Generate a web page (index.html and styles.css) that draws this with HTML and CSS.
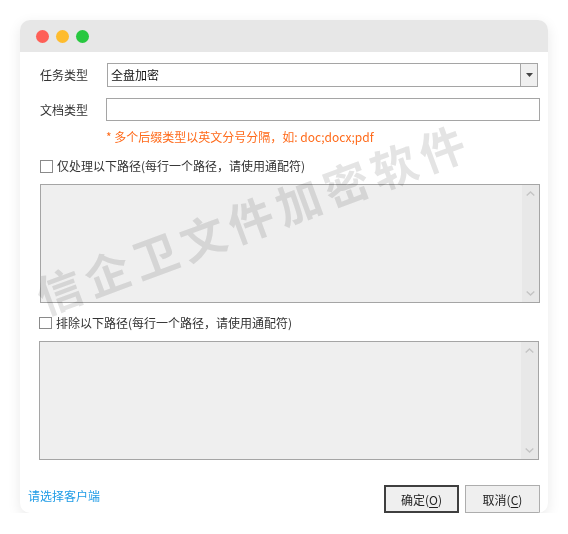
FILE: index.html
```html
<!DOCTYPE html>
<html lang="zh-CN">
<head>
<meta charset="utf-8">
<title>任务设置</title>
<link rel="stylesheet" href="styles.css">
</head>
<body>
<div class="window">
  <div class="titlebar">
    <span class="dot red"></span>
    <span class="dot yellow"></span>
    <span class="dot green"></span>
  </div>
  <div class="content">
    <div class="row row-task">
      <span class="label">任务类型</span>
      <div class="combo">
        <span class="combo-value">全盘加密</span>
        <span class="combo-btn">
          <svg width="7" height="4" viewBox="0 0 7 4"><path d="M0 0H7L3.5 4Z" fill="#444"/></svg>
        </span>
      </div>
    </div>
    <div class="row row-doc">
      <span class="label">文档类型</span>
      <input class="text-input" type="text" value="">
    </div>
    <div class="hint">* 多个后缀类型以英文分号分隔，如: doc;docx;pdf</div>
    <label class="check-row">
      <span class="checkbox"></span>
      <span class="check-label">仅处理以下路径(每行一个路径，请使用通配符)</span>
    </label>
    <div class="area area-include">
      <textarea class="area-text"></textarea>
      <div class="scrollbar">
        <svg width="9" height="5" viewBox="0 0 9 5"><path d="M0.7 4.5L4.5 1L8.3 4.5" fill="none" stroke="#c4c4c4" stroke-width="1.4"/></svg>
        <svg width="9" height="5" viewBox="0 0 9 5"><path d="M0.7 0.5L4.5 4L8.3 0.5" fill="none" stroke="#c4c4c4" stroke-width="1.4"/></svg>
      </div>
    </div>
    <label class="check-row check-exclude">
      <span class="checkbox small"></span>
      <span class="check-label">排除以下路径(每行一个路径，请使用通配符)</span>
    </label>
    <div class="area area-exclude">
      <textarea class="area-text"></textarea>
      <div class="scrollbar">
        <svg width="9" height="5" viewBox="0 0 9 5"><path d="M0.7 4.5L4.5 1L8.3 4.5" fill="none" stroke="#c4c4c4" stroke-width="1.4"/></svg>
        <svg width="9" height="5" viewBox="0 0 9 5"><path d="M0.7 0.5L4.5 4L8.3 0.5" fill="none" stroke="#c4c4c4" stroke-width="1.4"/></svg>
      </div>
    </div>
  </div>
  <div class="footer">
    <a class="link" href="#">请选择客户端</a>
    <div class="buttons">
      <button class="btn btn-default">确定(<u>O</u>)</button>
      <button class="btn">取消(<u>C</u>)</button>
    </div>
  </div>
  <div class="watermark"><span class="wm-text">信企卫文件加密软件</span></div>
</div>
</body>
</html>
```

FILE: styles.css
```css
html, body {
  margin: 0;
  padding: 0;
  background: #ffffff;
}
body {
  font-family: "Noto Sans CJK SC", "Noto Sans", sans-serif;
  font-size: 12px;
  color: #333333;
}
.window {
  position: relative;
  margin: 20px 0 0 20px;
  width: 528px;
  height: 493px;
  background: #ffffff;
  border-radius: 10px;
  box-shadow: 0 4px 14px rgba(0, 0, 0, 0.09);
  overflow: hidden;
  display: flex;
  flex-direction: column;
}
.titlebar {
  height: 32px;
  background: #e7e7e7;
  display: flex;
  align-items: center;
  gap: 7px;
  padding-left: 16px;
  flex-shrink: 0;
}
.dot {
  width: 13px;
  height: 13px;
  border-radius: 50%;
}
.red { background: #fe5f57; }
.yellow { background: #febc2e; }
.green { background: #28c840; }

.content {
  padding: 0 8px 0 20px;
  display: flex;
  flex-direction: column;
}
.row {
  display: flex;
  align-items: center;
}
.row-task {
  margin-top: 11px;
  height: 24px;
}
.row-doc {
  margin-top: 11px;
  height: 23px;
}
.label {
  width: 67px;
  flex-shrink: 0;
  line-height: 16px;
  color: #333333;
}
.row-doc .label {
  width: 66px;
}
.combo {
  width: 431px;
  height: 24px;
  box-sizing: border-box;
  border: 1px solid #a5a5a5;
  display: flex;
  align-items: stretch;
  background: #ffffff;
}
.combo-value {
  flex: 1;
  padding-left: 3px;
  line-height: 22px;
  color: #111111;
}
.combo-btn {
  width: 16px;
  border-left: 1px solid #a5a5a5;
  background: #f0f0f0;
  display: flex;
  align-items: center;
  justify-content: center;
}
.text-input {
  width: 434px;
  height: 23px;
  box-sizing: border-box;
  border: 1px solid #a5a5a5;
  margin: 0;
  padding: 0 3px;
  font: inherit;
  outline: none;
}
.hint {
  margin-top: 8px;
  margin-left: 66px;
  line-height: 16px;
  color: #ff6a1a;
}
.check-row {
  display: flex;
  align-items: center;
  gap: 4px;
  height: 16px;
  margin-top: 13px;
}
.checkbox {
  width: 13px;
  height: 13px;
  box-sizing: border-box;
  border: 1px solid #8a8a8a;
  background: #ffffff;
}
.checkbox.small {
  width: 13px;
  height: 12px;
  margin-left: -1px;
}
.check-label {
  line-height: 16px;
  color: #333333;
}
.check-exclude {
  margin-top: 12px;
}
.area {
  margin-top: 10px;
  width: 500px;
  height: 119px;
  box-sizing: border-box;
  border: 1px solid #a5a5a5;
  background: #efefef;
  display: flex;
}
.area-exclude {
  margin-left: -1px;
}
.area-text {
  flex: 1;
  border: none;
  background: transparent;
  resize: none;
  outline: none;
  margin: 0;
  padding: 2px 4px;
  font: inherit;
}
.scrollbar {
  width: 17px;
  background: #e8e8e8;
  display: flex;
  flex-direction: column;
  justify-content: space-between;
  align-items: center;
  padding: 6px 0 6px;
}
.footer {
  margin-top: 25px;
  padding: 0 8px;
  display: flex;
  justify-content: space-between;
  align-items: flex-start;
}
.link {
  margin-top: 3px;
  line-height: 16px;
  color: #1e9be6;
  text-decoration: none;
}
.buttons {
  display: flex;
  gap: 6px;
}
.btn {
  width: 75px;
  height: 28px;
  box-sizing: border-box;
  border: 1px solid #adadad;
  background: #efefef;
  font: inherit;
  color: #222222;
  padding: 0;
  margin: 0;
}
.btn-default {
  border: 2px solid #3f3f3f;
}
.btn u {
  text-underline-offset: 2px;
}
.watermark {
  position: absolute;
  left: 230px;
  top: 198px;
  width: 0;
  height: 0;
  pointer-events: none;
  mix-blend-mode: multiply;
}
.wm-text {
  position: absolute;
  left: 0;
  top: 0;
  transform: translate(-50%, -50%) rotate(-20.4deg);
  white-space: nowrap;
  font-family: "Noto Sans CJK SC", sans-serif;
  font-weight: 700;
  font-size: 45px;
  line-height: 1;
  letter-spacing: 6px;
  padding-left: 6px;
  color: #e4e4e4;
}
```
